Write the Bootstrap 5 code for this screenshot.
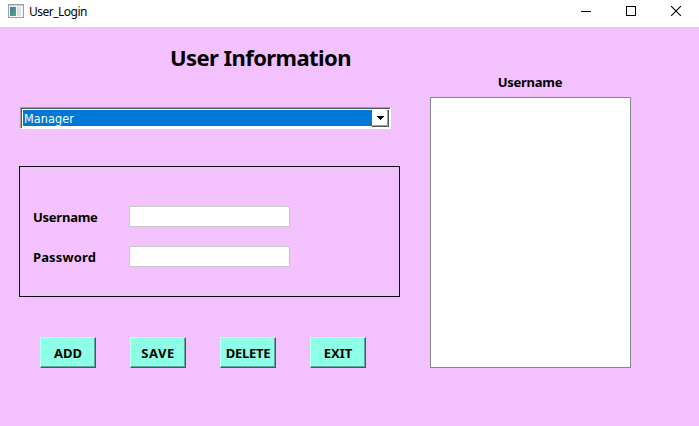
<!DOCTYPE html>
<html lang="en">
<head>
<meta charset="utf-8">
<meta name="viewport" content="width=device-width, initial-scale=1">
<title>User_Login</title>
<link href="https://cdn.jsdelivr.net/npm/bootstrap@5.3.0/dist/css/bootstrap.min.css" rel="stylesheet">
<style>
body{background:#f4c1ff;font-family:"Noto Sans","Open Sans",sans-serif;font-size:13px;line-height:20px;color:#000;height:426px}
.titlebar{height:27px;padding-left:8px;font-size:12px}
.titlebar .caption-text{margin-left:5px;letter-spacing:-.5px;line-height:24px;height:24px}
.win-controls{margin-right:18px;gap:35px;height:22px}
.left-pane{width:381px;margin-left:19px}
.page-title{font-size:22px;font-weight:700;line-height:30px;margin:15px 0 0 151px;letter-spacing:-.57px;white-space:nowrap}
.combo{width:371px;height:22px;margin:35px 0 0 1px;background:#fff;border:1px solid #fff;border-top-color:#a0a0a0;border-left-color:#a0a0a0}
.combo-inner{border-top:1px solid #555;border-left:1px solid #555;padding:1px}
.combo-value{width:349px;height:16px;background:#0078d7;color:#fff;padding-left:1px;font:12.5px/17px "DejaVu Sans Condensed","DejaVu Sans",sans-serif;letter-spacing:.1px}
.combo-arrow{width:17px;height:17px;background:#fff;border:0;border-right:1px solid #555;border-bottom:1px solid #555;box-shadow:inset -1px -1px #a0a0a0}
.group{height:131px;margin-top:37px;border:1px solid #000;padding:39px 0 0 13px}
.group .field-row{height:21px}
.group .field-row + .field-row{margin-top:19px}
.group .field-label{width:96px;line-height:22px;letter-spacing:-.25px}
.group .field-label.wide{letter-spacing:.13px}
.field{width:161px;height:21px;border:1px solid #c8c8c8;border-radius:0;padding:0 3px;font-size:13px;background:#fff}
.actions{margin:40px 0 0 21px;gap:34px}
.action{width:56px;height:31px;background:#8cffe6;border:1px solid;border-color:#b9fff2 #385f5c #385f5c #b9fff2;box-shadow:inset -1px -1px #5ba99b;font-weight:700;font-size:13px;line-height:31px;padding:0;color:#000;white-space:nowrap}
.action.wide{letter-spacing:.5px}
.action.tight{letter-spacing:-.3px}
.right-pane{width:201px;margin-left:30px}
.list-title{height:25px;margin-top:45px;letter-spacing:-.25px;padding-right:1px}
.userlist{height:271px;background:#fff;border:1px solid #828790}
</style>
</head>
<body class="m-0 overflow-hidden">
<header class="titlebar bg-white d-flex align-items-start">
  <svg class="mt-1" width="16" height="14" viewBox="0 0 16 14">
    <defs><linearGradient id="screen" x1="0" y1="0" x2="1" y2="1"><stop offset="0" stop-color="#3f79ae"/><stop offset="1" stop-color="#53ab73"/></linearGradient></defs>
    <rect x=".5" y=".5" width="15" height="13" fill="#f5f5f5" stroke="#9ba3a6"/>
    <path d="M1 1.5h14" stroke="#c8cdd2"/>
    <rect x="2" y="3" width="6" height="9" fill="url(#screen)"/>
    <rect x="9" y="3" width="4" height="9" fill="#dce3e6"/>
    <path d="M13.5 3v4" stroke="#fff"/>
  </svg>
  <span class="caption-text">User_Login</span>
  <div class="win-controls d-flex align-items-center ms-auto">
    <svg width="10" height="10"><path d="M0 5.5h10" stroke="#000"/></svg>
    <svg width="10" height="10"><rect x=".5" y=".5" width="9" height="9" fill="none" stroke="#000"/></svg>
    <svg width="10" height="10"><path d="M0 0l10 10M10 0L0 10" stroke="#000" stroke-width="1.1"/></svg>
  </div>
</header>
<main class="d-flex align-items-start">
  <section class="left-pane">
    <h1 class="page-title">User Information</h1>
    <div class="combo"><div class="combo-inner d-flex">
      <div class="combo-value">Manager</div>
      <button class="combo-arrow d-flex p-0" type="button" aria-label="Open list">
        <svg width="16" height="16" shape-rendering="crispEdges"><path d="M5 6h7v1h-1v1h-1v1h-1v1h-1v-1h-1v-1h-1v-1h-1z"/></svg>
      </button>
    </div></div>
    <form class="group">
      <div class="field-row d-flex">
        <label class="field-label fw-bold" for="username">Username</label>
        <input class="field" id="username" type="text">
      </div>
      <div class="field-row d-flex">
        <label class="field-label wide fw-bold" for="password">Password</label>
        <input class="field" id="password" type="password">
      </div>
    </form>
    <div class="actions d-flex">
      <button class="action" type="button">ADD</button>
      <button class="action wide" type="button">SAVE</button>
      <button class="action tight" type="button">DELETE</button>
      <button class="action" type="button">EXIT</button>
    </div>
  </section>
  <section class="right-pane">
    <div class="list-title fw-bold text-center">Username</div>
    <div class="userlist"></div>
  </section>
</main>
<script src="https://cdn.jsdelivr.net/npm/bootstrap@5.3.0/dist/js/bootstrap.bundle.min.js"></script>
</body>
</html>
